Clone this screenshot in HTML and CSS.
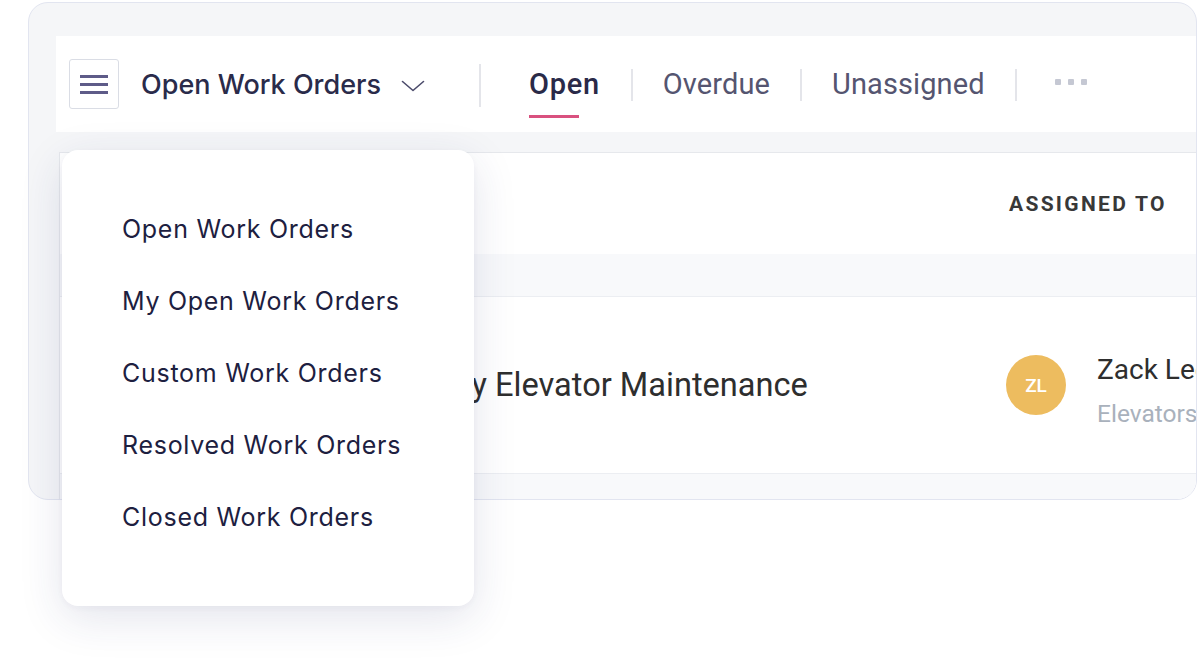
FILE: index.html
```html
<!DOCTYPE html>
<html lang="en">
<head>
<meta charset="utf-8">
<title>Work Orders</title>
<link rel="stylesheet" href="styles.css">
</head>
<body>
<div class="stage">
  <div class="card">
    <header class="topbar">
      <button class="menu-btn" aria-label="Menu">
        <svg width="28" height="22" viewBox="0 0 28 22"><g fill="#5e5b88"><rect x="0" y="2" width="28" height="3"/><rect x="0" y="10" width="28" height="3"/><rect x="0" y="18" width="28" height="3"/></g></svg>
      </button>
      <div class="view-title">
        <span>Open Work Orders</span>
        <svg class="chev" width="24" height="12" viewBox="0 0 24 12"><path d="M1.5 1.5 L12 10.5 L22.5 1.5" fill="none" stroke="#4b4b6b" stroke-width="1.6" stroke-linecap="round" stroke-linejoin="round"/></svg>
      </div>
      <div class="vsep"></div>
      <nav class="tabs">
        <span class="tab active">Open</span>
        <span class="tsep"></span>
        <span class="tab">Overdue</span>
        <span class="tsep"></span>
        <span class="tab">Unassigned</span>
        <span class="tsep"></span>
        <span class="more"><i></i><i></i><i></i></span>
      </nav>
    </header>
    <section class="table">
      <div class="thead">
        <div class="th"></div>
        <div class="th th-assigned">ASSIGNED TO</div>
      </div>
      <div class="band"></div>
      <div class="row">
        <div class="cell-title">Monthly Elevator Maintenance</div>
        <div class="cell-assignee">
          <div class="avatar">ZL</div>
          <div class="who">
            <div class="name">Zack Lee</div>
            <div class="team">Elevators</div>
          </div>
        </div>
      </div>
      <div class="band end"></div>
    </section>
  </div>
  <ul class="dropdown">
    <li>Open Work Orders</li>
    <li>My Open Work Orders</li>
    <li>Custom Work Orders</li>
    <li>Resolved Work Orders</li>
    <li>Closed Work Orders</li>
  </ul>
</div>
</body>
</html>
```

FILE: styles.css
```css
* { box-sizing: border-box; }
html, body { margin: 0; padding: 0; background: #ffffff; }
body { width: 1198px; height: 672px; overflow: hidden; font-family: "Inter", "Roboto", sans-serif; }

.stage { position: relative; width: 1198px; height: 672px; padding-top: 2px; padding-left: 28px; }

.card {
  width: 1169px;
  height: 498px;
  border: 1px solid #e2e5f0;
  border-radius: 20px;
  background: #f5f6f8;
  overflow: hidden;
  padding: 33px 0 0 27px;
}

.topbar {
  height: 96px;
  background: #ffffff;
  display: flex;
  align-items: center;
  padding-left: 13px;
}

.menu-btn {
  width: 50px;
  height: 50px;
  margin-top: -1px;
  border: 1px solid #dadde5;
  border-radius: 3px;
  background: #fff;
  display: flex;
  align-items: center;
  justify-content: center;
  padding: 0;
}

.view-title {
  display: flex;
  align-items: center;
  margin-left: 22px;
  font-family: "Inter", sans-serif;
  font-weight: 500;
  font-size: 27px;
  color: #2a2b4a;
}
.view-title .chev { margin-left: 20px; margin-top: 4px; }

.vsep { width: 2px; height: 43px; background: #e4e5ea; margin-left: 54px; margin-top: 2px; }

.tabs { display: flex; align-items: center; margin-left: 48px; height: 100%; }
.tab {
  position: relative;
  font-family: "Roboto", sans-serif;
  font-size: 29px;
  letter-spacing: 0.1px;
  color: #555570;
  padding: 0 30px 0 30px;
  line-height: 36px;
}
.tab:first-child { padding: 0 31px 0 0; }
.tab.active { color: #2a2a48; font-weight: 500; letter-spacing: 0.7px; }
.tab.active::after {
  content: "";
  position: absolute;
  left: 0;
  top: 49px;
  width: 50px;
  height: 3px;
  background: #d9517f;
}
.tsep { width: 2px; height: 32px; background: #e4e5ea; margin-top: 2px; }
.more { display: flex; gap: 7px; margin-left: 38px; margin-top: -4px; }
.more i { width: 6px; height: 6px; background: #c5c8d3; border-radius: 1px; display: block; }

.table {
  margin-top: 20px;
  margin-left: 3px;
  background: #fff;
  border-top: 1px solid #e6e8ec;
  border-left: 1px solid #e6e8ec;
  height: 400px;
}

.thead { display: grid; grid-template-columns: 946px 1fr; height: 101px; align-items: center; }
.th-assigned {
  padding-left: 3px;
  font-family: "Roboto", sans-serif;
  font-weight: 700;
  font-size: 21px;
  letter-spacing: 2.3px;
  color: #383838;
  white-space: nowrap;
}

.band { height: 43px; background: #f8f9fb; border-bottom: 1px solid #eceef2; }
.band.end { border-bottom: 0; height: 60px; border-top: 1px solid #eceef2; }

.row { display: grid; grid-template-columns: 946px 1fr; height: 176px; align-items: center; }
.cell-title {
  padding-left: 310px;
  font-family: "Roboto", sans-serif;
  font-size: 32.6px;
  color: #2e2e2e;
  white-space: nowrap;
}
.cell-assignee { display: flex; align-items: center; white-space: nowrap; }
.avatar {
  width: 60px;
  height: 60px;
  border-radius: 50%;
  background: #edbc5f;
  color: #fff;
  font-family: "Roboto", sans-serif;
  font-weight: 500;
  font-size: 19px;
  display: flex;
  align-items: center;
  justify-content: center;
  flex: none;
}
.who { margin-left: 31px; margin-top: 13px; }
.name { font-family: "Roboto", sans-serif; font-size: 28px; color: #2e2e2e; line-height: 34px; }
.team { font-family: "Roboto", sans-serif; font-size: 24.5px; color: #a9b1bc; line-height: 32px; margin-top: 11px; }

.dropdown {
  position: absolute;
  left: 62px;
  top: 150px;
  width: 412px;
  height: 456px;
  margin: 0;
  padding: 43px 0 0 60px;
  list-style: none;
  background: #fff;
  border-radius: 16px;
  box-shadow: 0 12px 44px rgba(40, 50, 110, 0.13), 0 2px 6px rgba(40, 50, 110, 0.04);
}
.dropdown li {
  height: 72px;
  line-height: 72px;
  font-family: "Inter", sans-serif;
  font-size: 25px;
  letter-spacing: 0.72px;
  color: #1d2040;
}
```
